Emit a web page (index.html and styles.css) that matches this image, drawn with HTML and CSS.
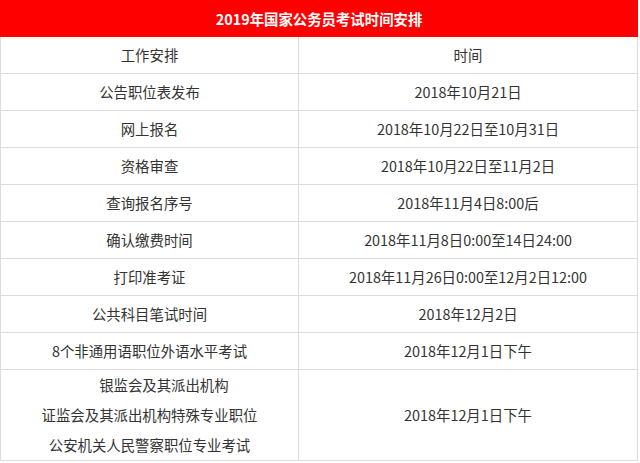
FILE: index.html
```html
<!DOCTYPE html>
<html lang="zh-CN">
<head>
<meta charset="utf-8">
<title>2019年国家公务员考试时间安排</title>
<link rel="stylesheet" href="styles.css">
</head>
<body>
<table class="schedule">
  <colgroup>
    <col class="col-task">
    <col class="col-time">
  </colgroup>
  <thead>
    <tr><th colspan="2" class="title">2019年国家公务员考试时间安排</th></tr>
  </thead>
  <tbody>
    <tr><td>工作安排</td><td>时间</td></tr>
    <tr><td>公告职位表发布</td><td>2018年10月21日</td></tr>
    <tr><td>网上报名</td><td>2018年10月22日至10月31日</td></tr>
    <tr><td>资格审查</td><td>2018年10月22日至11月2日</td></tr>
    <tr><td>查询报名序号</td><td>2018年11月4日8:00后</td></tr>
    <tr><td>确认缴费时间</td><td>2018年11月8日0:00至14日24:00</td></tr>
    <tr><td>打印准考证</td><td>2018年11月26日0:00至12月2日12:00</td></tr>
    <tr><td>公共科目笔试时间</td><td>2018年12月2日</td></tr>
    <tr><td>8个非通用语职位外语水平考试</td><td>2018年12月1日下午</td></tr>
    <tr class="multi"><td><p>　　银监会及其派出机构</p><p>证监会及其派出机构特殊专业职位</p><p>公安机关人民警察职位专业考试</p></td><td>2018年12月1日下午</td></tr>
  </tbody>
</table>
</body>
</html>
```

FILE: styles.css
```css
html, body {
  margin: 0;
  padding: 0;
  background: #ffffff;
}
body {
  font-family: "Noto Sans CJK SC", "Liberation Sans", sans-serif;
  font-size: 14.4px;
  color: #333333;
}
.schedule {
  width: 637px;
  border-collapse: collapse;
  table-layout: fixed;
}
.schedule col.col-task {
  width: 298px;
}
.schedule col.col-time {
  width: 339px;
}
.schedule th.title {
  background: #ff0000;
  color: #ffffff;
  font-weight: bold;
  font-size: 14.4px;
  height: 35px;
  padding: 0;
  border: 1px solid #ff0000;
  text-align: center;
}
.schedule td {
  border: 1px solid #dcdcdc;
  height: 36px;
  padding: 0;
  text-align: center;
  vertical-align: middle;
  line-height: 20px;
}
.schedule .multi td {
  height: 90px;
}
.schedule .multi p {
  margin: 0;
  line-height: 30px;
}
```
